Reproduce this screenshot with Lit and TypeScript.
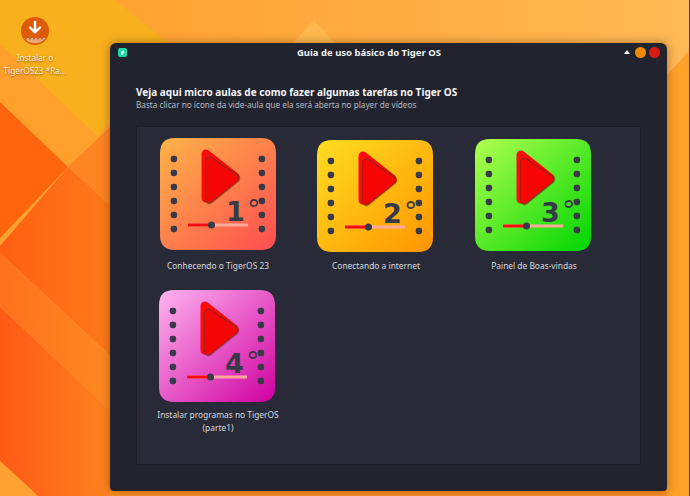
import { LitElement, html, css, svg } from "lit";
import { customElement, property } from "lit/decorators.js";

const DOT_YS = [21, 35, 49, 63, 77, 91];

@customElement("lesson-icon")
class LessonIcon extends LitElement {
  @property() num = "1";
  @property() from = "#ffb347";
  @property() to = "#ff5050";
  @property({ type: Number }) dx = 0;
  @property({ type: Number }) dy = 0;
  static styles = css`
    :host { display: block; width: 120px; height: 118px; }
    svg { display: block; }
    .num { font-family: "DejaVu Sans", sans-serif; font-weight: 700; font-size: 27px; fill: #383a48; }
    .deg { font-family: "DejaVu Sans", sans-serif; font-weight: 400; font-size: 27px; fill: #383a48; }
  `;
  render() {
    const id = "g" + this.num;
    return html`<svg width="120" height="118" viewBox="0 0 120 118">
      <defs>
        <linearGradient id=${id} x1="0" y1="0" x2="1" y2="1">
          <stop offset="0" stop-color=${this.from}></stop>
          <stop offset="1" stop-color=${this.to}></stop>
        </linearGradient>
      </defs>
      <g transform="translate(${this.dx} ${this.dy})">
        <path d="M15 0H101Q116 0 116 15V97Q116 112 101 112H15Q0 112 0 97V15Q0 0 15 0Z" fill="url(#${id})"></path>
        ${DOT_YS.map(
          (y) => svg`
          <rect x="10.7" y=${y - 3.2} width="6.4" height="6.4" rx="2.4" fill="#383a48"></rect>
          <rect x="98.7" y=${y - 3.2} width="6.4" height="6.4" rx="2.4" fill="#383a48"></rect>`
        )}
        <path d="M46 16L75 39L46 60Z" fill="#ff0a0a" stroke="#ff0a0a" stroke-width="9" stroke-linejoin="round"></path>
        <path d="M49.5 23L76 40.5L49.5 62Z" fill="#000" fill-opacity=".2" stroke="#000" stroke-opacity=".2" stroke-width="9" stroke-linejoin="round"></path>
        <path d="M49.5 23L75.5 40.5L49.5 61.5Z" fill="#8e2c18" stroke="#8e2c18" stroke-width="8" stroke-linejoin="round"></path>
        <path d="M49.5 23L75 40.5L49.5 61Z" fill="#f80606" stroke="#f80606" stroke-width="6.4" stroke-linejoin="round"></path>
        <rect x="28" y="85.5" width="60" height="3" fill="#ffa8a0"></rect>
        <rect x="28" y="85.5" width="24" height="3" fill="#f50b0b"></rect>
        <circle cx="51.5" cy="87" r="3.5" fill="#383a48"></circle>
        <text class="num" x="66" y="83">${this.num}</text>
        <text class="deg" x="87" y="81">°</text>
      </g>
    </svg>`;
  }
}

const LESSONS = [
  { num: "1", label: "Conhecendo o TigerOS 23", from: "#ffb347", to: "#ff4d50", dx: 2, dy: 0 },
  { num: "2", label: "Conectando a internet", from: "#ffdd20", to: "#ff9500", dx: 1, dy: 2 },
  { num: "3", label: "Painel de Boas-vindas", from: "#b0ff50", to: "#00d500", dx: 1, dy: 1 },
  { num: "4", label: "Instalar programas no TigerOS (parte1)", from: "#ffb4f0", to: "#d000a0", dx: 1, dy: 3 },
];

@customElement("app-root")
class AppRoot extends LitElement {
  static styles = css`
    :host { display: block; width: 690px; height: 496px; position: relative; overflow: hidden; font-family: "Noto Sans", sans-serif; }
    .wall { position: absolute; inset: 0; display: block; }
    .desk-icon { position: absolute; left: 4px; top: 17px; width: 62px; display: flex; flex-direction: column; align-items: center; color: #f6ead6; font-size: 8.2px; line-height: 13px; text-align: center; text-shadow: 0 1px 2px rgba(90,50,0,.7); white-space: nowrap; }
    .desk-icon svg { display: block; margin-bottom: 6px; }
    .window { position: absolute; left: 110px; top: 43px; width: 557px; height: 448px; box-sizing: border-box; background: #21242e; border-radius: 6px 6px 4px 4px; box-shadow: 0 0 10px 1px rgba(70,40,0,.38); display: flex; flex-direction: column; }
    .bar { height: 18px; flex: none; display: flex; align-items: center; padding: 0 7px 0 8px; }
    .app { width: 9px; height: 9px; display: block; }
    .title { flex: 1; text-align: center; font-size: 9.5px; font-weight: 700; color: #f0f1f4; padding-left: 3px; padding-right: 16px; }
    .ctl { display: flex; align-items: center; gap: 3px; }
    .tri { width: 0; height: 0; border: 3.5px solid transparent; border-top: 0; border-bottom: 4px solid #fff; margin-right: 2px; }
    .dot { width: 11px; height: 11px; border-radius: 50%; }
    .min { background: #ef8a05; }
    .close { background: #d81a14; }
    .intro { padding: 24px 26px 0; }
    h1 { margin: 0; font-size: 10px; line-height: 14px; font-weight: 700; color: #f2f3f6; white-space: nowrap; }
    p { margin: 0; font-size: 8.2px; line-height: 12px; color: #b6b9c4; white-space: nowrap; }
    .panel { flex: 1; margin: 15px 26px 26px; box-sizing: border-box; border: 1px solid #1c1e27; background: #282b37; padding: 11px 0 0 2px; display: grid; grid-template-columns: repeat(3, 158px); grid-auto-rows: 149px; }
    .item { display: flex; flex-direction: column; align-items: center; }
    .label { width: 140px; margin-top: 3px; font-size: 8.4px; line-height: 13px; text-align: center; color: #d6d8df; }
  `;
  render() {
    return html`
      <svg class="wall" width="690" height="496" viewBox="0 0 690 496">
        <defs>
          <linearGradient id="sky" gradientUnits="userSpaceOnUse" x1="115" y1="0" x2="690" y2="0">
            <stop offset="0" stop-color="#ffa232"></stop>
            <stop offset="1" stop-color="#ffb955"></stop>
          </linearGradient>
          <linearGradient id="dia" gradientUnits="userSpaceOnUse" x1="0" y1="0" x2="115" y2="0">
            <stop offset="0" stop-color="#ff5f12"></stop>
            <stop offset="1" stop-color="#ff7a1a"></stop>
          </linearGradient>
          <linearGradient id="bnd" gradientUnits="userSpaceOnUse" x1="0" y1="0" x2="115" y2="0">
            <stop offset="0" stop-color="#ff701c"></stop>
            <stop offset="1" stop-color="#ff8a22"></stop>
          </linearGradient>
          <linearGradient id="low" gradientUnits="userSpaceOnUse" x1="0" y1="0" x2="115" y2="0">
            <stop offset="0" stop-color="#ff5a15"></stop>
            <stop offset="1" stop-color="#ff8420"></stop>
          </linearGradient>
        </defs>
        <rect width="690" height="496" fill="url(#sky)"></rect>
        <path d="M0 0H115L168 43L110 120L98 137L0 44Z" fill="#f8b01c"></path>
        <path d="M293 43L314 20L335 43Z" fill="#ffb84f"></path>
        <path d="M0 44L98 137L68 167L0 102Z" fill="#ffa02c"></path>
        <path d="M0 102L68 167L0 238Z" fill="#ff650c"></path>
        <path d="M68 167L115 122V210Z" fill="#ff8524"></path>
        <path d="M0 246L68 167L115 210V360L0 253Z" fill="url(#dia)"></path>
        <path d="M0 253L115 360V415L0 307Z" fill="url(#bnd)"></path>
        <path d="M0 307L115 415V496H38L0 461Z" fill="url(#low)"></path>
        <path d="M0 461L38 496H0Z" fill="#ffa030"></path>
        <rect x="110" y="120" width="557" height="376" fill="#ff9024"></rect>
        <path d="M667 75L690 50V496H667Z" fill="#ffa028"></path>
        <rect x="689" y="0" width="1" height="496" fill="#5a3a10"></rect>
      </svg>

      <div class="desk-icon">
        <svg width="28" height="28" viewBox="0 0 28 28">
          <circle cx="14" cy="14" r="14" fill="#dc5a08"></circle>
          <path d="M3 21H25A14 14 0 0 1 3 21Z" fill="#eba878"></path>
          <path d="M4 21.5H24" stroke="#b86a3a" stroke-width="2" stroke-dasharray="2 2"></path>
          <path d="M14 5V15M9 10.5L14 15.5L19 10.5" fill="none" stroke="#fff" stroke-width="2.4" stroke-linecap="round" stroke-linejoin="round"></path>
        </svg>
        <span>Instalar o</span>
        <span>TigerOS23 *Ra...</span>
      </div>

      <section class="window">
        <header class="bar">
          <svg class="app" viewBox="0 0 9 9">
            <rect width="9" height="9" rx="2" fill="#1fd9a2"></rect>
            <path d="M3 7L3.5 3.5L6.5 2L5.5 4.5H6.5L4.5 7Z" fill="#e8fff8"></path>
          </svg>
          <div class="title">Guia de uso básico do Tiger OS</div>
          <div class="ctl">
            <span class="tri"></span>
            <span class="dot min"></span>
            <span class="dot close"></span>
          </div>
        </header>
        <div class="intro">
          <h1>Veja aqui micro aulas de como fazer algumas tarefas no Tiger OS</h1>
          <p>Basta clicar no ícone da vide-aula que ela será aberta no player de vídeos</p>
        </div>
        <div class="panel">
          ${LESSONS.map(
            (l) => html`<div class="item">
              <lesson-icon num=${l.num} from=${l.from} to=${l.to} dx=${l.dx} dy=${l.dy}></lesson-icon>
              <div class="label">${l.label}</div>
            </div>`
          )}
        </div>
      </section>
    `;
  }
}
